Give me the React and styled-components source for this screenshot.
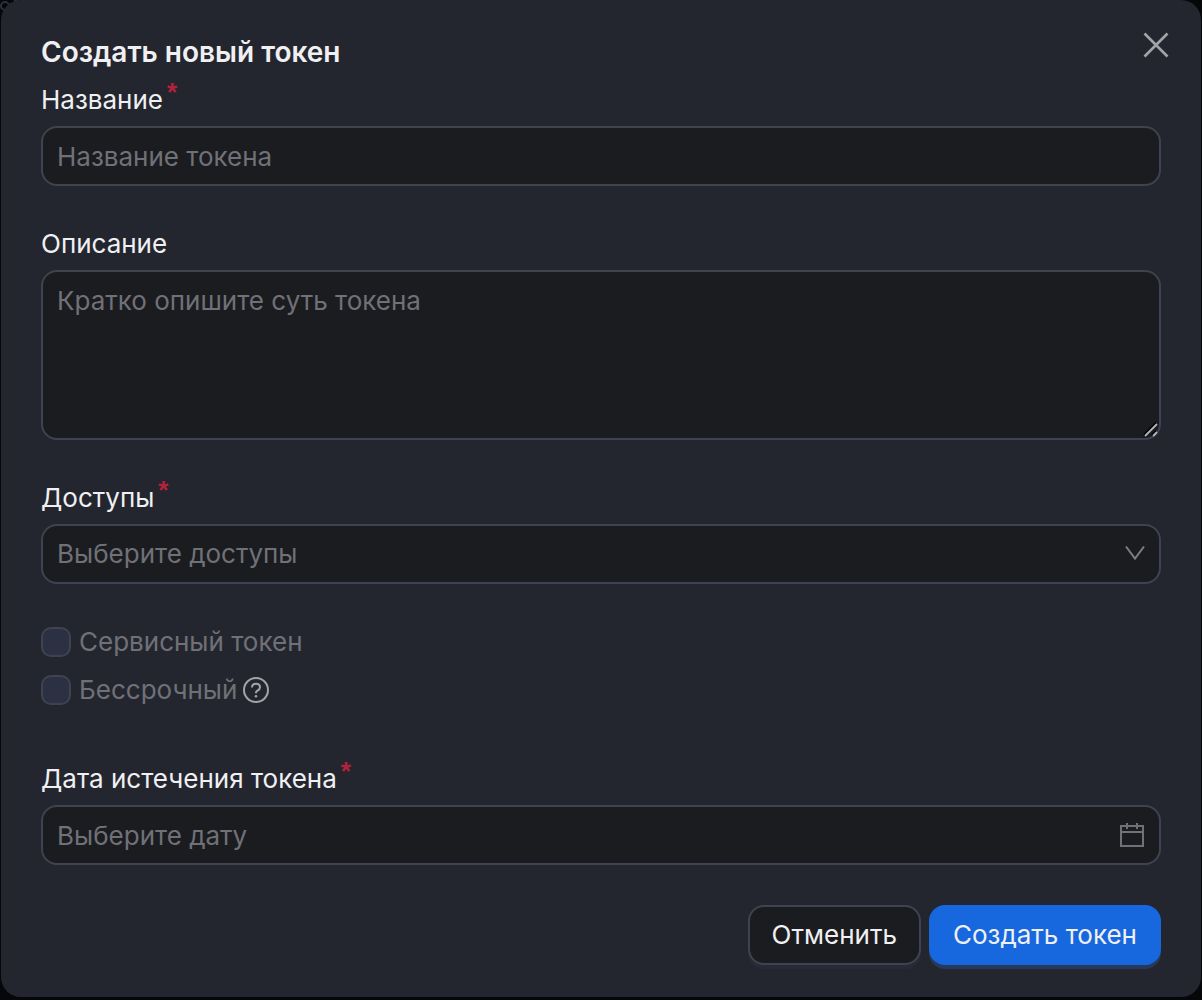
import React from "react";
import styled, { createGlobalStyle, css } from "styled-components";

const color = {
  page: "#060709",
  panel: "#24262f",
  field: "#1b1c20",
  border: "#40434f",
  text: "#f0f0f2",
  muted: "#707177",
  icon: "#a3a4a8",
  accent: "#1768df",
  danger: "#b3223b",
};

const GlobalStyle = createGlobalStyle`
  *, *::before, *::after { box-sizing: border-box; }
  body {
    margin: 0;
    background: ${color.page};
    color: ${color.text};
    font: 400 26px/36px Inter, "Noto Sans", sans-serif;
  }
  button, input, select, textarea { font: inherit; color: inherit; margin: 0; }
`;

const Page = styled.div`
  position: relative;
  padding: 0 1px 3px;
`;

const Backdrop = styled.svg`
  position: absolute;
  top: 0;
  left: 0;
`;

const Dialog = styled.main`
  position: relative;
  padding: 34px 40px 32px;
  border-radius: 20px;
  background: ${color.panel};
`;

const CloseButton = styled.button`
  position: absolute;
  top: 29px;
  right: 29px;
  display: flex;
  padding: 0;
  border: 0;
  background: none;
  color: ${color.icon};
  cursor: pointer;
`;

const Title = styled.h1`
  margin: 0 0 12px;
  font-size: 28px;
  line-height: 36px;
  font-weight: 600;
`;

const Form = styled.form`
  display: flex;
  flex-direction: column;
  gap: 40px;
`;

const Field = styled.div`
  display: flex;
  flex-direction: column;
  gap: 8px;
`;

const Label = styled.label`
  display: flex;
  gap: 4px;
`;

const Required = styled.span`
  font-family: "Liberation Sans", Arial, sans-serif;
  font-weight: 700;
  line-height: 20px;
  color: ${color.danger};
`;

const Control = styled.div`
  position: relative;
  display: flex;
`;

const fieldBox = css`
  width: 100%;
  border: 2px solid ${color.border};
  border-radius: 16px;
  background: ${color.field};
  outline: none;
  &::placeholder {
    color: ${color.muted};
    opacity: 1;
  }
  &:focus {
    border-color: ${color.accent};
  }
`;

const Input = styled.input`
  ${fieldBox}
  height: 60px;
  padding: 0 14px;
`;

const Textarea = styled.textarea`
  ${fieldBox}
  height: 170px;
  padding: 11px 14px;
  resize: none;
`;

const Select = styled.select`
  ${fieldBox}
  height: 60px;
  padding: 0 14px;
  appearance: none;
  color: ${color.muted};
`;

const Adornment = styled.svg`
  position: absolute;
  right: ${(p) => p.$right}px;
  bottom: ${(p) => p.$bottom}px;
  color: ${(p) => p.$color || color.muted};
  pointer-events: none;
`;

const Options = styled.div`
  display: flex;
  flex-direction: column;
  gap: 12px;
  padding-bottom: 13px;
`;

const OptionRow = styled.div`
  display: flex;
  align-items: center;
  gap: 6px;
`;

const OptionLabel = styled.label`
  display: flex;
  align-items: center;
  gap: 8px;
  color: ${color.muted};
`;

const Checkbox = styled.input`
  appearance: none;
  width: 30px;
  height: 30px;
  border: 2px solid ${color.border};
  border-radius: 10px;
  background: #2b3142;
`;

const HelpButton = styled.button`
  display: flex;
  padding: 0;
  border: 0;
  background: none;
  color: ${color.icon};
`;

const Actions = styled.div`
  display: flex;
  justify-content: flex-end;
  gap: 8px;
`;

const Button = styled.button`
  height: 60px;
  padding: 0 22px;
  border: 2px solid ${(p) => (p.$primary ? color.accent : color.border)};
  border-radius: 16px;
  background: ${(p) => (p.$primary ? color.accent : color.field)};
  box-shadow: 0 4px 0 ${(p) => (p.$primary ? "#27395a" : "#272b38")};
  cursor: pointer;
`;

export default function App() {
  return (
    <Page>
      <GlobalStyle />
      <Backdrop width="20" height="14" fill="none" stroke="#2b3040" strokeWidth="2" aria-hidden="true">
        <circle cx="5" cy="6" r="4" />
        <path d="M14 1h4" />
      </Backdrop>
      <Dialog role="dialog" aria-labelledby="title">
        <Title id="title">Создать новый токен</Title>
        <CloseButton type="button" aria-label="Закрыть">
          <svg width="32" height="32" viewBox="0 0 32 32" fill="none" stroke="currentColor" strokeWidth="2.6">
            <path d="M4.5 4.5l23 23M27.5 4.5l-23 23" />
          </svg>
        </CloseButton>
        <Form onSubmit={(e) => e.preventDefault()}>
          <Field>
            <Label htmlFor="name">
              Название<Required>*</Required>
            </Label>
            <Input id="name" placeholder="Название токена" />
          </Field>
          <Field>
            <Label htmlFor="description">Описание</Label>
            <Control>
              <Textarea id="description" placeholder="Кратко опишите суть токена" />
              <Adornment width="16" height="16" viewBox="0 0 16 16" fill="none" $right={2} $bottom={2} $color="#b4b5b8">
                <path d="M1 13L13 1M9 13l4-4" stroke="#000" strokeWidth="2" />
                <path d="M2 14L14 2M10 14l4-4" stroke="currentColor" strokeWidth="1.8" />
              </Adornment>
            </Control>
          </Field>
          <Field>
            <Label htmlFor="access">
              Доступы<Required>*</Required>
            </Label>
            <Control>
              <Select id="access" defaultValue="">
                <option value="">Выберите доступы</option>
              </Select>
              <Adornment width="20" height="16" viewBox="0 0 20 16" fill="none" stroke="currentColor" strokeWidth="2" $right={16} $bottom={23} $color="#7d7e83">
                <path d="M1 1.5l9 12 9-12" />
              </Adornment>
            </Control>
          </Field>
          <Options>
            <OptionRow>
              <OptionLabel>
                <Checkbox type="checkbox" disabled />
                Сервисный токен
              </OptionLabel>
            </OptionRow>
            <OptionRow>
              <OptionLabel>
                <Checkbox type="checkbox" disabled />
                Бессрочный
              </OptionLabel>
              <HelpButton type="button" aria-label="Подсказка">
                <svg width="26" height="26" viewBox="0 0 26 26" fill="none" stroke="currentColor" strokeWidth="2">
                  <circle cx="13" cy="13" r="12" />
                  <path d="M9 10.6c0-2.2 1.7-3.8 4-3.8s4 1.5 4 3.5c0 1.7-1 2.6-2.3 3.2-1.1.5-1.7 1.1-1.7 2.2v.6" />
                  <circle cx="13" cy="19.2" r="1.3" fill="currentColor" stroke="none" />
                </svg>
              </HelpButton>
            </OptionRow>
          </Options>
          <Field>
            <Label htmlFor="date">
              Дата истечения токена<Required>*</Required>
            </Label>
            <Control>
              <Input id="date" placeholder="Выберите дату" />
              <Adornment width="24" height="24" viewBox="0 0 24 24" fill="none" stroke="currentColor" strokeWidth="2" $right={17} $bottom={18}>
                <path d="M1 3h22v20H1zM1 9h22M7 0v6M17 0v6" />
              </Adornment>
            </Control>
          </Field>
          <Actions>
            <Button type="button">Отменить</Button>
            <Button type="submit" $primary>
              Создать токен
            </Button>
          </Actions>
        </Form>
      </Dialog>
    </Page>
  );
}
